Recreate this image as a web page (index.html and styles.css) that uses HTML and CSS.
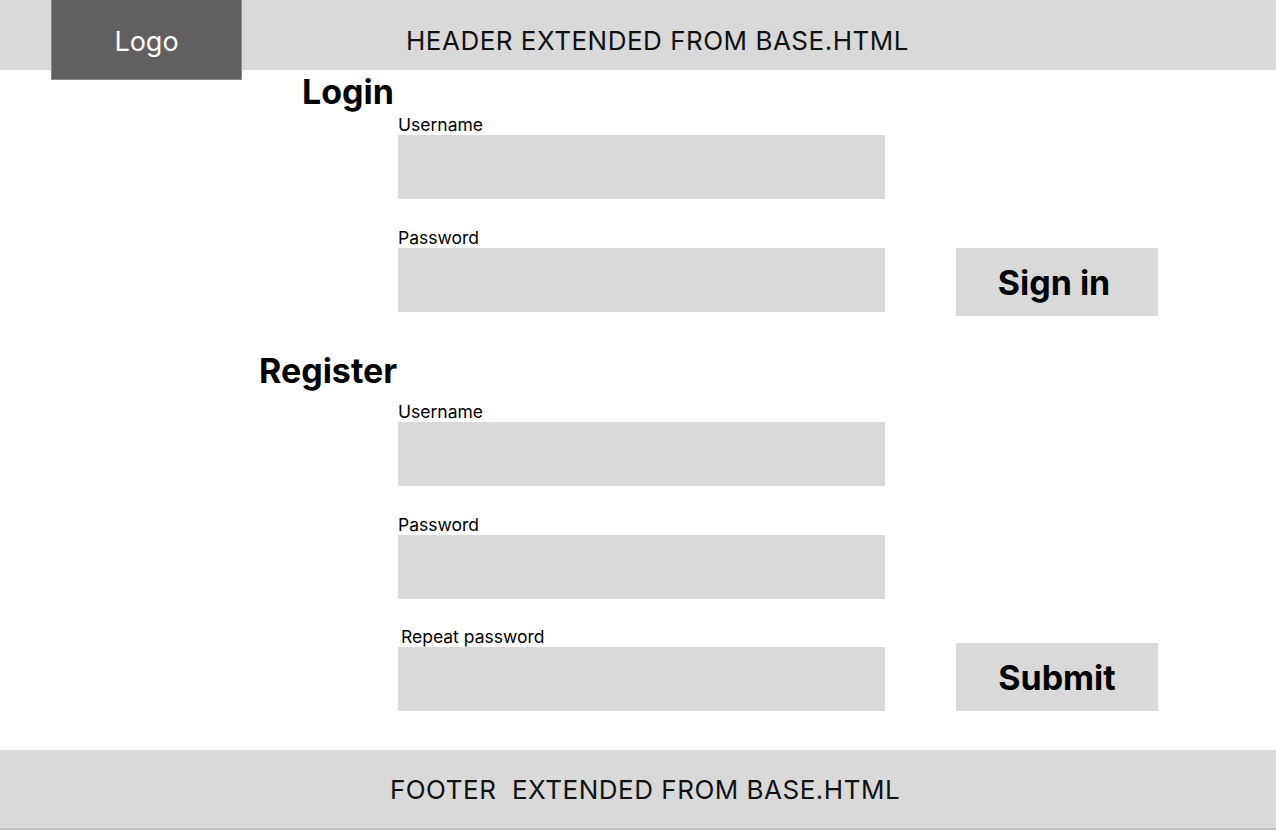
FILE: index.html
```html
<!DOCTYPE html>
<html lang="en">
<head>
<meta charset="utf-8">
<title>Login</title>
<link rel="stylesheet" href="styles.css">
</head>
<body>
<header class="site-header">
  <div class="logo">Logo</div>
  <div class="header-title">HEADER EXTENDED FROM BASE.HTML</div>
</header>
<main class="content">
  <section class="login">
    <h1 class="heading heading-login">Login</h1>
    <div class="field">
      <label class="label">Username</label>
      <div class="input-row"><div class="input"></div></div>
    </div>
    <div class="field">
      <label class="label">Password</label>
      <div class="input-row"><div class="input"></div><button class="btn btn-signin">Sign in</button></div>
    </div>
  </section>
  <section class="register">
    <h1 class="heading heading-register">Register</h1>
    <div class="field">
      <label class="label">Username</label>
      <div class="input-row"><div class="input"></div></div>
    </div>
    <div class="field">
      <label class="label">Password</label>
      <div class="input-row"><div class="input"></div></div>
    </div>
    <div class="field field-last">
      <label class="label label-indent">Repeat password</label>
      <div class="input-row"><div class="input"></div><button class="btn btn-submit">Submit</button></div>
    </div>
  </section>
</main>
<footer class="site-footer">
  <div class="footer-title">FOOTER&nbsp; EXTENDED FROM BASE.HTML</div>
</footer>
</body>
</html>
```
FILE: styles.css
```css
* { box-sizing: border-box; }
html, body { margin: 0; padding: 0; }
body {
  width: 1276px;
  height: 831px;
  background: #ffffff;
  font-family: Inter, "Noto Sans", sans-serif;
  color: #000;
  overflow: hidden;
}
.site-header {
  height: 70px;
  background: #d9d9d9;
  display: flex;
  align-items: flex-start;
}
.logo {
  margin-left: 51px;
  width: 191px;
  height: 80px;
  background: #625f60;
  border: 1px solid #8c8a8b;
  border-top: none;
  color: #ffffff;
  font-size: 27px;
  line-height: 84px;
  text-align: center;
  position: relative;
  z-index: 2;
  flex-shrink: 0;
}
.header-title {
  margin-left: 164px;
  padding-top: 25px;
  font-size: 26px;
  line-height: 32px;
  color: #111;
  letter-spacing: 0.5px;
  white-space: nowrap;
}
.content {
  display: flex;
  flex-direction: column;
}
.heading {
  margin: 0;
  font-weight: 700;
  font-size: 34px;
  line-height: 40px;
}
.heading-login { margin-left: 302px; margin-top: 2px; }
.heading-register { margin-left: 259px; margin-top: 35px; margin-bottom: 11px; }
.field { margin-left: 398px; margin-top: 29px; }
.heading + .field { margin-top: 3px; }
.field-last { margin-top: 28px; }
.label {
  display: block;
  font-size: 17.5px;
  line-height: 19px;
  height: 20px;
}
.label-indent { padding-left: 3px; }
.input-row {
  display: flex;
  align-items: flex-start;
}
.input {
  width: 487px;
  height: 64px;
  background: #d9d9d9;
  flex-shrink: 0;
}
.btn {
  margin-left: 71px;
  width: 202px;
  height: 68px;
  background: #d9d9d9;
  border: none;
  padding: 0;
  font-family: Inter, "Noto Sans", sans-serif;
  font-weight: 700;
  font-size: 34px;
  color: #000;
}
.btn-signin { padding-right: 6px; }
.btn-submit { margin-top: -4px; }
.site-footer {
  margin-top: 39px;
  height: 80px;
  background: #d9d9d9;
  border-bottom: 2px solid #bdbdbd;
  display: flex;
  justify-content: center;
  align-items: center;
}
.footer-title {
  font-size: 26px;
  line-height: 32px;
  color: #111;
  letter-spacing: 0.5px;
  margin-left: 14px;
  padding-top: 2px;
  white-space: nowrap;
}
```
